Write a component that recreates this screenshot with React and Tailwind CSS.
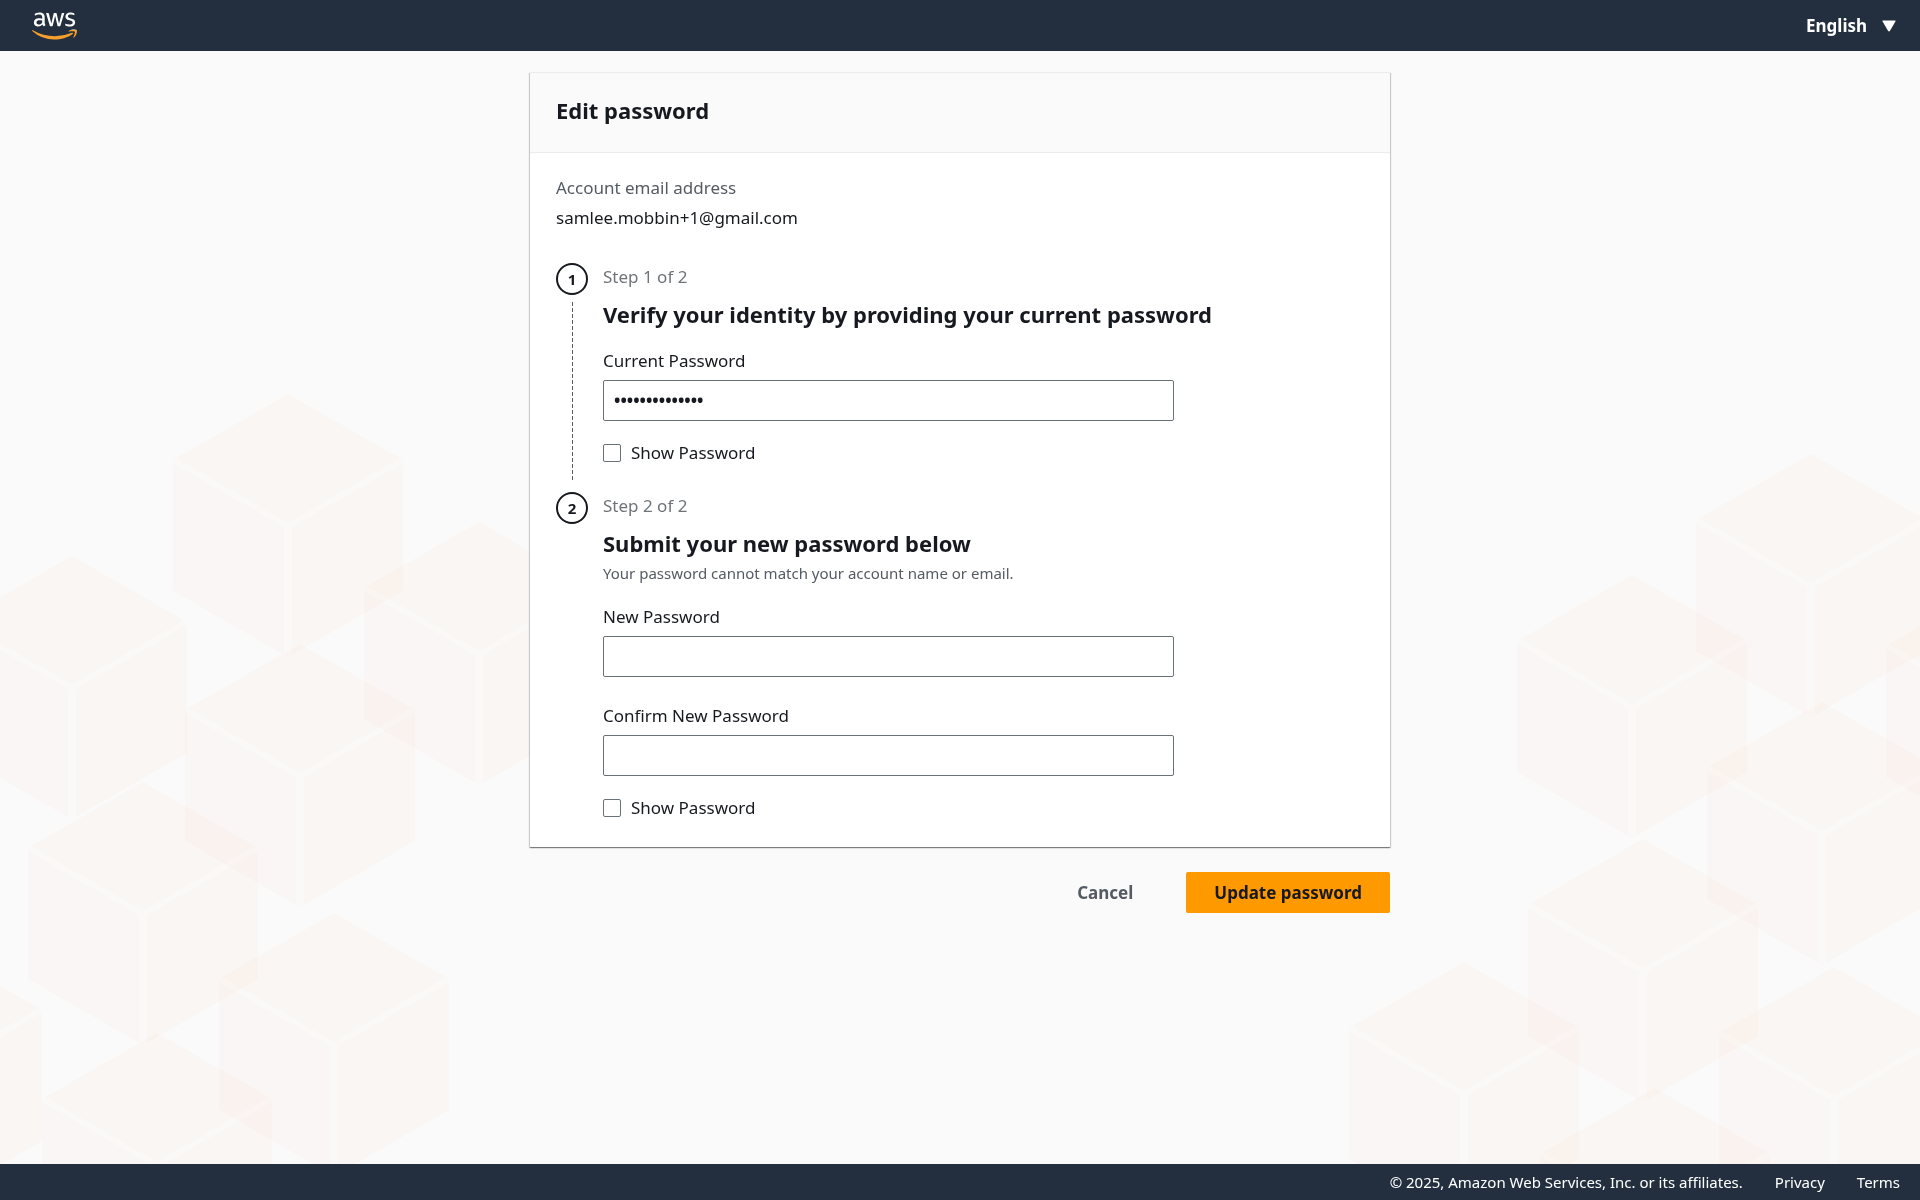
import React, { useState } from 'react';
import { FaAws } from 'react-icons/fa';

const leftCubes = [
    [288, 394],
    [72, 556],
    [479, 522],
    [300, 644],
    [143, 782],
    [-73, 944],
    [334, 913],
    [157, 1033],
];

const rightCubes = [
    [1811, 454],
    [1632, 575],
    [2001, 580],
    [1822, 702],
    [1643, 839],
    [1464, 962],
    [1834, 967],
    [1655, 1088],
];

// x, y is the top corner of the cube
const Cube = ({ x, y }) => (
    <g transform={`translate(${x} ${y})`}>
        <path className="mix-blend-multiply" d="M0 0L115 66V197L0 263L-115 197V66Z" fill="#fffefc" />
        <path className="mix-blend-multiply" d="M0 0L112 64L0 129L-112 64Z" fill="#fffcfb" />
        <path className="mix-blend-multiply" d="M-115 69L-4 133V261L-115 197Z" fill="#fffcfd" />
        <path className="mix-blend-multiply" d="M115 69L4 133V261L115 197Z" fill="#fffcfb" />
    </g>
);

const Backdrop = () => (
    <div aria-hidden="true">
        <svg
            className="absolute bottom-0 left-0 mix-blend-multiply"
            width="600"
            height="774"
            viewBox="0 390 600 774"
        >
            {leftCubes.map(([x, y]) => (
                <Cube key={`${x}-${y}`} x={x} y={y} />
            ))}
        </svg>
        <svg
            className="absolute right-0 bottom-0 mix-blend-multiply"
            width="580"
            height="714"
            viewBox="1340 450 580 714"
        >
            {rightCubes.map(([x, y]) => (
                <Cube key={`${x}-${y}`} x={x} y={y} />
            ))}
        </svg>
    </div>
);

const Header = () => (
    <header className="flex h-[51px] items-center justify-between bg-[#232f3e] pl-8 pr-6">
        <a href="#home" aria-label="AWS">
            {/* white letters, orange smile */}
            <svg className="absolute h-0 w-0" aria-hidden="true">
                <defs>
                    <linearGradient id="aws-logo" x1="0" y1="0" x2="0" y2="1">
                        <stop offset="0.63" stopColor="#ffffff" />
                        <stop offset="0.63" stopColor="#f79f2d" />
                    </linearGradient>
                </defs>
            </svg>
            <FaAws className="h-9 w-[45px]" fill="url(#aws-logo)" />
        </a>
        <div className="flex items-center">
            <select
                aria-label="Language"
                className="appearance-none bg-transparent text-[17px] font-bold text-white"
            >
                <option>English</option>
            </select>
            <svg className="ml-3.5 h-3 w-3.5" viewBox="0 0 14 12" fill="white" aria-hidden="true">
                <path d="M1 0.5H13Q14 0.5 13.4 1.6L8 10.8Q7 12 6 10.8L0.6 1.6Q0 0.5 1 0.5Z" />
            </svg>
        </div>
    </header>
);

const Step = ({ number, title, hint, connected, children }) => (
    <li className="flex gap-[15px]">
        <div className="flex flex-col items-center">
            <span className="flex h-8 w-8 shrink-0 items-center justify-center rounded-full border-2 border-[#16191f] text-[15px] font-bold">
                {number}
            </span>
            {connected && (
                <span className="mt-[7px] mb-2.5 w-px flex-1 bg-[repeating-linear-gradient(to_bottom,#545b64_0_4px,transparent_4px_6px)]" />
            )}
        </div>
        <div className="flex-1">
            <p className="pt-0.5 text-[17px] leading-6 text-[#6f7479]">Step {number} of 2</p>
            <h2 className="mt-[9px] text-[22px] leading-8 font-bold">{title}</h2>
            {hint && <p className="mt-1 text-[15px] leading-5 text-[#545b64]">{hint}</p>}
            {children}
        </div>
    </li>
);

const PasswordField = ({ id, label, value, onChange, visible }) => (
    <div className="max-w-[571px]">
        <label htmlFor={id} className="block text-[17px] leading-6">
            {label}
        </label>
        <input
            id={id}
            type={visible ? 'text' : 'password'}
            value={value}
            onChange={(e) => onChange(e.target.value)}
            className={`mt-[7px] block h-[41px] w-full rounded-[2px] border border-[#687078] bg-white px-2.5 text-[17px] outline-none focus:border-[#00a1c9] ${
                visible ? 'font-normal' : 'font-bold'
            }`}
        />
    </div>
);

const ShowPassword = ({ id, checked, onChange }) => (
    <div className="mt-5 flex items-center gap-2.5">
        <input
            id={id}
            type="checkbox"
            checked={checked}
            onChange={(e) => onChange(e.target.checked)}
            className="h-[18px] w-[18px] appearance-none rounded-[2px] border border-[#687078] bg-white checked:bg-[#0073bb]"
        />
        <label htmlFor={id} className="text-[17px] leading-6">
            Show Password
        </label>
    </div>
);

const App = () => {
    const [currentPassword, setCurrentPassword] = useState('samplepassword');
    const [newPassword, setNewPassword] = useState('');
    const [confirmPassword, setConfirmPassword] = useState('');
    const [showCurrent, setShowCurrent] = useState(false);
    const [showNew, setShowNew] = useState(false);

    return (
        <div className="flex min-h-screen flex-col bg-[#fafafa] font-['Noto_Sans',sans-serif] text-[#16191f]">
            <Header />

            <main className="relative flex-1 overflow-hidden px-4 pt-[21px] pb-10">
                <Backdrop />

                <form className="relative mx-auto max-w-[860px]" onSubmit={(e) => e.preventDefault()}>
                    <div className="bg-white shadow-[0_1px_1px_0_rgba(0,0,0,0.3),1px_1px_1px_0_rgba(0,0,0,0.15),-1px_1px_1px_0_rgba(0,0,0,0.15)]">
                        {/* Card header */}
                        <div className="border-y border-[#eaeded] bg-[#fafafa] px-[26px] pt-[21px] pb-[26px]">
                            <h1 className="text-[22px] leading-8 font-bold">Edit password</h1>
                        </div>

                        <div className="px-[26px] pt-[23px] pb-[27px]">
                            <dl className="text-[17px] leading-6">
                                <dt className="text-[#545b64]">Account email address</dt>
                                <dd className="mt-1.5">samlee.mobbin+1@gmail.com</dd>
                            </dl>

                            <ol className="mt-[33px]">
                                <Step
                                    number={1}
                                    title="Verify your identity by providing your current password"
                                    connected
                                >
                                    <div className="mt-[19px] pb-[27px]">
                                        <PasswordField
                                            id="current-password"
                                            label="Current Password"
                                            value={currentPassword}
                                            onChange={setCurrentPassword}
                                            visible={showCurrent}
                                        />
                                        <ShowPassword
                                            id="show-current"
                                            checked={showCurrent}
                                            onChange={setShowCurrent}
                                        />
                                    </div>
                                </Step>

                                <Step
                                    number={2}
                                    title="Submit your new password below"
                                    hint="Your password cannot match your account name or email."
                                >
                                    <div className="mt-[22px] space-y-[27px]">
                                        <PasswordField
                                            id="new-password"
                                            label="New Password"
                                            value={newPassword}
                                            onChange={setNewPassword}
                                            visible={showNew}
                                        />
                                        <PasswordField
                                            id="confirm-password"
                                            label="Confirm New Password"
                                            value={confirmPassword}
                                            onChange={setConfirmPassword}
                                            visible={showNew}
                                        />
                                    </div>
                                    <ShowPassword id="show-new" checked={showNew} onChange={setShowNew} />
                                </Step>
                            </ol>
                        </div>
                    </div>

                    {/* Actions */}
                    <div className="mt-[25px] flex justify-end gap-[25px] text-[17px] font-bold">
                        <button type="button" className="h-[41px] px-7 text-[#545b64]">
                            Cancel
                        </button>
                        <button type="submit" className="h-[41px] rounded-[2px] bg-[#ff9900] px-7">
                            Update password
                        </button>
                    </div>
                </form>
            </main>

            <footer className="flex h-9 items-center justify-end gap-8 bg-[#232f3e] px-5 text-[15px] text-white">
                <span>© 2025, Amazon Web Services, Inc. or its affiliates.</span>
                <a href="#privacy">Privacy</a>
                <a href="#terms">Terms</a>
            </footer>
        </div>
    );
};

export default App;
